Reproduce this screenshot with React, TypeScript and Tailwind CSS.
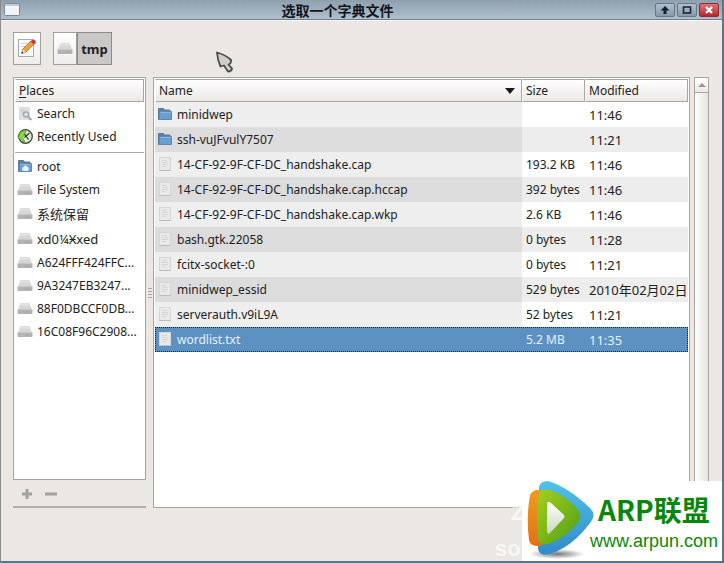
import React, { useState } from 'react';

interface Place {
  name: string;
  icon: 'search' | 'recent' | 'home' | 'drive';
  tall?: boolean;
}

interface FileEntry {
  name: string;
  size: string;
  modified: string;
  folder?: boolean;
}

const shortcuts: Place[] = [
  { name: 'Search', icon: 'search' },
  { name: 'Recently Used', icon: 'recent' },
];

const places: Place[] = [
  { name: 'root', icon: 'home' },
  { name: 'File System', icon: 'drive' },
  { name: '系统保留', icon: 'drive', tall: true },
  { name: 'xd0¼Ӿxed', icon: 'drive', tall: true },
  { name: 'A624FFF424FFC...', icon: 'drive' },
  { name: '9A3247EB3247...', icon: 'drive' },
  { name: '88F0DBCCF0DB...', icon: 'drive' },
  { name: '16C08F96C2908...', icon: 'drive' },
];

const files: FileEntry[] = [
  { name: 'minidwep', size: '', modified: '11:46', folder: true },
  { name: 'ssh-vuJFvulY7507', size: '', modified: '11:21', folder: true },
  { name: '14-CF-92-9F-CF-DC_handshake.cap', size: '193.2 KB', modified: '11:46' },
  { name: '14-CF-92-9F-CF-DC_handshake.cap.hccap', size: '392 bytes', modified: '11:46' },
  { name: '14-CF-92-9F-CF-DC_handshake.cap.wkp', size: '2.6 KB', modified: '11:46' },
  { name: 'bash.gtk.22058', size: '0 bytes', modified: '11:28' },
  { name: 'fcitx-socket-:0', size: '0 bytes', modified: '11:21' },
  { name: 'minidwep_essid', size: '529 bytes', modified: '2010年02月02日' },
  { name: 'serverauth.v9iL9A', size: '52 bytes', modified: '11:21' },
  { name: 'wordlist.txt', size: '5.2 MB', modified: '11:35' },
];

const DriveIcon = () => (
  <svg width="16" height="16" viewBox="0 0 16 16" className="shrink-0">
    <path d="M3.500 2h9L15 8.500H1z" fill="#d6d6d6" />
    <path d="M4 2.500h8l.8 2H3.200z" fill="#e4e4e4" />
    <rect x="0.500" y="8" width="15" height="5" rx="1" fill="#b4b4b4" />
    <rect x="1" y="8" width="14" height="1" fill="#c8c8c8" />
    <path d="M8 11h5" stroke="#a4a4a4" />
  </svg>
);

const FolderIcon = ({ home }: { home?: boolean }) => (
  <svg width="16" height="16" viewBox="0 0 16 16" className="shrink-0">
    <path d="M1.500 12.500V1.500h5l1 1.500h5.500v9.500z" fill="#5d7fa3" stroke="#5b7b9e" />
    <path d="M2.500 12.500V5l1-.5h11v8z" fill="#6c9dd0" stroke="#5a89ba" />
    <path d="M3.500 5.500h10.500" stroke="#8bb5df" />
    {home && <path d="M4.500 9.500l4-3.500 4 3.500h-1v2.500H5.500v-2.500z" fill="#e9f2fb" />}
  </svg>
);

const FileIcon = () => (
  <svg width="16" height="16" viewBox="0 0 16 16" className="shrink-0">
    <rect x="2.500" y="0.500" width="11" height="13" fill="#e9e9e7" stroke="#d6d6d4" />
    <path d="M2.500 13.500h11" stroke="#bcbcbc" />
    <path d="M5 3.500h5M5 5.500h6M5 7.500h6M5 9.500h4" stroke="#d6d6d4" />
  </svg>
);

const PlaceIcon = ({ icon }: { icon: Place['icon'] }) => {
  if (icon === 'drive') return <DriveIcon />;
  if (icon === 'home') return <FolderIcon home />;
  if (icon === 'search') {
    return (
      <svg width="16" height="16" viewBox="0 0 16 16" className="shrink-0">
        <rect x="2" y="1" width="11" height="13" fill="#dedede" />
        <path d="M4 4h4M4 6h3M4 8h2" stroke="#c8c8c8" />
        <circle cx="9" cy="8.500" r="2.500" fill="#dce7f1" stroke="#a3abb2" strokeWidth="1.500" />
        <path d="M11 10.500l3.500 3.500" stroke="#a6a6a6" strokeWidth="2" />
      </svg>
    );
  }
  return (
    <svg width="16" height="16" viewBox="0 0 16 16" className="shrink-0">
      <circle cx="8.500" cy="7.500" r="6.800" fill="#dfead2" stroke="#3c4434" strokeWidth="1.300" />
      <path d="M8 13.500L.5 8 2 7.500C2 3.500 5 1.300 9 2L8 5.500 5.500 8z" fill="#8ad83c" stroke="#5a9a26" strokeWidth="0.700" />
      <path d="M7.500 8.500L12.500 4M7.500 5l4 5.500" stroke="#333" strokeWidth="1.200" />
    </svg>
  );
};

const HeaderButton = ({ children }: { children: React.ReactNode }) => (
  <button className="flex h-[23px] w-full items-center justify-between border border-[#a9a6a1] border-l-white bg-linear-to-b from-white to-[#ebe9e6] pr-[6px] pl-[3px] text-left font-normal">
    {children}
  </button>
);

const PlaceRow = ({ place }: { place: Place }) => (
  <li>
    <button
      className={`flex w-full items-center gap-1 pl-[2px] text-left whitespace-nowrap ${place.tall ? 'h-[25px] text-[13px]' : 'h-[23px]'}`}
    >
      <PlaceIcon icon={place.icon} />
      {place.name}
    </button>
  </li>
);

const TitleBar = () => (
  <header className="flex h-5 items-center border-b border-[#6e7f92] bg-linear-to-b from-[#8e9fae] to-[#afbfce] px-[3px]">
    <svg width="16" height="14" viewBox="0 0 16 14">
      <rect x="0.500" y="0.500" width="15" height="12" rx="1" fill="#f1f3f4" stroke="#77899a" />
      <path d="M1 2h14" stroke="#c1ccd6" strokeWidth="2" />
    </svg>
    <h1 className="flex-1 text-center font-['Noto_Sans_CJK_SC',sans-serif] text-[14px] leading-5 font-bold text-[#10161c]">
      选取一个字典文件
    </h1>
    <div className="flex gap-[2px]">
      <button aria-label="Shade" className="flex h-[14px] w-5 items-center justify-center rounded-xs border border-[#66788a] bg-linear-to-b from-[#b0c0ce] to-[#8799aa]">
        <svg width="10" height="8" viewBox="0 0 10 8">
          <path d="M5 0l4.500 4.500h-3V8h-3V4.500h-3z" fill="#16202a" />
        </svg>
      </button>
      <button aria-label="Maximize" className="flex h-[14px] w-5 items-center justify-center rounded-xs border border-[#66788a] bg-linear-to-b from-[#b0c0ce] to-[#8799aa]">
        <svg width="10" height="8" viewBox="0 0 10 8">
          <path d="M1.500 1v6h7V1z" fill="none" stroke="#16202a" strokeWidth="1.500" />
        </svg>
      </button>
      <button aria-label="Close" className="flex h-[14px] w-5 items-center justify-center rounded-xs border border-[#8c2d33] bg-linear-to-b from-[#dc7378] to-[#b8222a]">
        <svg width="10" height="8" viewBox="0 0 10 8">
          <path d="M2 1l6 6M8 1L2 7" stroke="#fff" strokeWidth="2.400" />
        </svg>
      </button>
    </div>
  </header>
);

const Toolbar = () => (
  <div className="flex gap-3">
    <button aria-label="Type a file name" className="flex h-[33px] w-7 items-center justify-center border border-[#a29f9a] bg-linear-to-b from-white to-[#efedeb]">
      <svg width="20" height="20" viewBox="0 0 20 20">
        <rect x="1.500" y="0.500" width="15" height="17" fill="#fafafa" stroke="#aaa" />
        <path d="M4 4.500h7M4 7.500h5M4 10.500h3" stroke="#d2d2d2" />
        <path d="M4.500 14.500l1.500-4.500L14 2l3 3-8 8z" fill="#efa03c" stroke="#9c6a2c" strokeWidth="0.800" />
        <path d="M4.500 14.500l1.500-4.500 3 3z" fill="#ecd6b2" />
        <path d="M4.500 14.500l.6-1.900 1.300 1.300z" fill="#222" />
        <path d="M13.500 2.500l2-1.800q3.500 0 3.300 3l-1.800 1.800z" fill="#cb3238" />
      </svg>
    </button>
    <div className="flex">
      <button aria-label="File System" className="flex h-[33px] w-6 items-center justify-center border border-[#a29f9a] bg-linear-to-b from-white to-[#efedeb]">
        <DriveIcon />
      </button>
      <button className="h-[33px] w-[35px] border border-[#8d8b88] bg-[#c9c8c6] text-center text-[13px] font-bold">tmp</button>
    </div>
  </div>
);

const Watermark = () => (
  <div className="absolute right-0 bottom-0 flex h-20 w-[200px] bg-white">
    <svg width="74" height="80" viewBox="0 0 74 80" className="shrink-0">
      <defs>
        <linearGradient id="blue" x1="0" y1="0" x2="0" y2="1">
          <stop offset="0" stopColor="#4fc3e8" />
          <stop offset="1" stopColor="#3289c8" />
        </linearGradient>
        <linearGradient id="green" x1="0" y1="0" x2="1" y2="1">
          <stop offset="0" stopColor="#a4cf1d" />
          <stop offset="1" stopColor="#4e9e17" />
        </linearGradient>
        <linearGradient id="orange" x1="0" y1="0" x2="0" y2="1">
          <stop offset="0" stopColor="#ee9d1f" />
          <stop offset="1" stopColor="#e46f16" />
        </linearGradient>
        <linearGradient id="arrow" x1="0" y1="0" x2="0" y2="1">
          <stop offset="0" stopColor="#fff" />
          <stop offset="1" stopColor="#c9d9bb" />
        </linearGradient>
        <radialGradient id="shadow">
          <stop offset="0" stopColor="#777" />
          <stop offset="1" stopColor="#fff" />
        </radialGradient>
      </defs>
      <ellipse cx="35" cy="73" rx="28" ry="5" fill="url(#shadow)" />
      <path d="M17 6Q18 0 26 0Q46 6 68 27Q75 34 68 42Q50 66 28 73Q18 76 16 68Z" fill="url(#blue)" />
      <path d="M8 14Q11 8 19 9L19 65Q8 66 7 59Q4 36 8 14Z" fill="url(#orange)" />
      <path d="M17 13Q19 7 28 9Q45 15 56 29Q61 35 56 42Q42 58 26 63Q17 65 16 57Q14 34 17 13Z" fill="url(#green)" />
      <path d="M25 22Q26 20 29 22L42 34Q43 36 42 37L28 52Q25 54 25 50Z" fill="url(#arrow)" />
    </svg>
    <div className="-ml-[6px] flex flex-col pt-2 whitespace-nowrap text-[#0a870a]">
      <span className="pl-2 font-['Noto_Sans_CJK_SC',sans-serif] text-[28px] leading-10 font-bold">ARP联盟</span>
      <a href="#" className="font-['Liberation_Sans',sans-serif] text-[18px] leading-6">www.arpun.com</a>
    </div>
  </div>
);

const App = () => {
  const [selected, setSelected] = useState('wordlist.txt');

  return (
    <div className="relative flex min-h-screen flex-col overflow-hidden border-r-2 border-b-2 border-l border-[#5f7486] border-l-[#8c8c8c] bg-[#ebe8e3] font-['Noto_Sans','Noto_Sans_CJK_SC',sans-serif] text-[12px] leading-5 text-[#222]">
      <TitleBar />

      <main className="flex flex-1 flex-col gap-3 border-t border-[#f6f5f3] pt-[11px] pr-[13px] pb-[53px] pl-3">
        <Toolbar />

        <div className="flex flex-1">
          {/* Places */}
          <aside className="flex w-[133px] shrink-0 flex-col border-b-2 border-[#b3afab]">
            <div className="flex-1 border border-[#a8a49f] bg-white p-px">
              <HeaderButton>
                <span><u className="underline-offset-2">P</u>laces</span>
              </HeaderButton>
              <ul>
                {shortcuts.map((place) => <PlaceRow key={place.name} place={place} />)}
              </ul>
              <hr className="mt-1 mb-[2px] border-[#aaa]" />
              <ul>
                {places.map((place) => <PlaceRow key={place.name} place={place} />)}
              </ul>
            </div>
            <div className="flex h-[26px] items-center gap-1 px-1 pt-[2px]">
              <button aria-label="Add bookmark" className="flex h-5 w-5 items-center justify-center">
                <svg width="12" height="12" viewBox="0 0 12 12">
                  <path d="M6 1v10M1 6h10" stroke="#a3a19e" strokeWidth="3" />
                </svg>
              </button>
              <button aria-label="Remove bookmark" className="flex h-5 w-5 items-center justify-center">
                <svg width="12" height="12" viewBox="0 0 12 12">
                  <path d="M0 6h12" stroke="#a3a19e" strokeWidth="3" />
                </svg>
              </button>
            </div>
          </aside>

          {/* Splitter */}
          <div className="flex w-[7px] shrink-0 items-center justify-center">
            <svg width="5" height="12" viewBox="0 0 5 12">
              <path d="M1 1.500h4M1 4.500h4M1 7.500h4M1 10.500h4" stroke="#aaa6a1" />
            </svg>
          </div>

          {/* File list */}
          <section className="min-w-0 flex-1 border border-[#a8a49f] bg-white p-px">
            <table className="w-full table-fixed border-collapse text-left">
              <colgroup>
                <col />
                <col className="w-[63px]" />
                <col className="w-[103px]" />
              </colgroup>
              <thead>
                <tr>
                  <th className="p-0">
                    <HeaderButton>
                      Name
                      <svg width="10" height="6" viewBox="0 0 10 6">
                        <path d="M0 0h10L5 6z" fill="#1a1a1a" />
                      </svg>
                    </HeaderButton>
                  </th>
                  <th className="p-0"><HeaderButton>Size</HeaderButton></th>
                  <th className="p-0"><HeaderButton>Modified</HeaderButton></th>
                </tr>
              </thead>
              <tbody>
                {files.map((file) => {
                  const active = file.name === selected;
                  return (
                    <tr
                      key={file.name}
                      onClick={() => setSelected(file.name)}
                      className={
                        active
                          ? 'h-[25px] bg-[#5c91c2] text-[#e8f1fa] outline-1 -outline-offset-1 outline-dotted outline-[#0c1c2c]'
                          : 'group h-[25px] even:bg-[#ededed]'
                      }
                    >
                      <td className={active ? 'p-0' : 'bg-[#eeeeee] p-0 group-even:bg-[#dcdcdc]'}>
                        <div className="flex items-center gap-1 pl-[2px] whitespace-nowrap">
                          {file.folder ? <FolderIcon /> : <FileIcon />}
                          {file.name}
                        </div>
                      </td>
                      <td className="p-0 pl-1 whitespace-nowrap">{file.size}</td>
                      <td className="p-0 pl-1 text-[13px] whitespace-nowrap">{file.modified}</td>
                    </tr>
                  );
                })}
              </tbody>
            </table>
          </section>

          {/* Scrollbar */}
          <div className="ml-1 flex w-[15px] shrink-0 flex-col border border-[#a8a49f]">
            <button aria-label="Scroll up" className="flex h-[15px] items-center justify-center border-b border-[#a8a49f] bg-linear-to-b from-white to-[#ebe9e6]">
              <svg width="8" height="4" viewBox="0 0 8 4">
                <path d="M4 0l4 4H0z" fill="#9a9792" />
              </svg>
            </button>
            <div className="flex-1 bg-linear-to-r from-white to-[#e6e3df]" />
          </div>
        </div>
      </main>

      {/* Faded lettering behind the badge */}
      <div aria-hidden="true" className="absolute right-[195px] bottom-0 flex w-8 flex-col gap-3 font-['Liberation_Sans',sans-serif] text-[22px] leading-6 font-bold text-[#f8f7f5]">
        <span className="pl-4">Z</span>
        <span>so</span>
      </div>
      <Watermark />

      {/* Mouse pointer */}
      <svg width="20" height="24" viewBox="0 0 20 24" className="absolute top-[50px] left-[213px]">
        <path d="M3 2.500Q12 5 17 10Q17.500 13.500 14.500 14.500L18 18.500Q17.500 21.500 14 21.500L10 15.500L6.500 16.500Q3.500 10 3 2.500Z" fill="#cfcdca" stroke="#4c4c4c" strokeWidth="1.800" strokeLinejoin="round" />
      </svg>
    </div>
  );
};

export default App;
